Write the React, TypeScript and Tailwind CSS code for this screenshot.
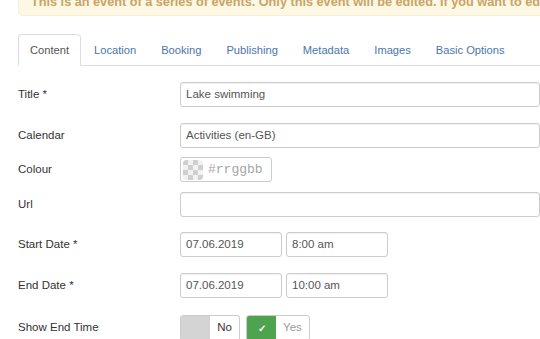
const tabs = ["Content", "Location", "Booking", "Publishing", "Metadata", "Images", "Basic Options"];

const Label = ({ children }: { children: React.ReactNode }) => (
  <label className="w-[162px] shrink-0 text-[11.5px] text-[#333]">{children}</label>
);

const TextInput = ({ value, className }: { value?: string; className?: string }) => (
  <div
    className={`h-[25px] flex items-center px-[5px] border border-[#ccc] rounded-[3px] shadow-[inset_0_1px_1px_rgba(0,0,0,0.06)] text-[11.5px] text-[#555] bg-white ${className ?? ""}`}
  >
    {value}
  </div>
);

const Swatch = () => (
  <svg width="20" height="20" viewBox="0 0 20 20" className="rounded-[3px]">
    <defs>
      <pattern id="chk" width="10" height="10" patternUnits="userSpaceOnUse">
        <rect width="10" height="10" fill="#f2f2f2" />
        <rect width="5" height="5" fill="#cfcfcf" />
        <rect x="5" y="5" width="5" height="5" fill="#cfcfcf" />
      </pattern>
    </defs>
    <rect width="20" height="20" rx="3" fill="url(#chk)" />
  </svg>
);

export default function App() {
  return (
    <div className="w-[540px] h-[339px] overflow-hidden bg-white font-['Liberation_Sans',Arial,sans-serif]">
      <div className="ml-[18px] mt-[-16px] w-[600px] pt-[8px] pb-[4px] px-[12px] leading-[18px] bg-[#fcf8e3] border border-[#fbeed5] rounded-[4px] text-[12.7px] font-bold text-[#c8a468] whitespace-nowrap">
        This is an event of a series of events. Only this event will be edited. If you want to edit
      </div>

      <ul className="ml-[18px] mt-[18px] flex border-b border-[#ddd] whitespace-nowrap">
        {tabs.map((tab, i) => (
          <li
            key={tab}
            className={`-mb-px mr-px h-[32px] flex items-center px-[11px] border rounded-t-[4px] text-[11.15px] ${
              i === 0
                ? "bg-white border-[#ddd] border-b-transparent text-[#555]"
                : "border-transparent text-[#4a76ad]"
            }`}
          >
            {tab}
          </li>
        ))}
      </ul>

      <div className="ml-[18px] flex flex-col">
        <div className="mt-[16px] flex items-center">
          <Label>Title *</Label>
          <TextInput value="Lake swimming" className="w-[400px]" />
        </div>
        <div className="mt-[16px] flex items-center">
          <Label>Calendar</Label>
          <TextInput value="Activities (en-GB)" className="w-[400px]" />
        </div>
        <div className="mt-[9px] flex items-center">
          <Label>Colour</Label>
          <div className="w-[92px] h-[25px] flex items-center gap-[5px] pl-[2px] border border-[#ccc] rounded-[3px]">
            <Swatch />
            <span className="font-['Liberation_Mono',monospace] text-[13px] text-[#a6a6a6]">#rrggbb</span>
          </div>
        </div>
        <div className="mt-[10px] flex items-center">
          <Label>Url</Label>
          <TextInput className="w-[400px]" />
        </div>
        <div className="mt-[15px] flex items-center">
          <Label>Start Date *</Label>
          <div className="flex gap-[4px]">
            <TextInput value="07.06.2019" className="w-[102px]" />
            <TextInput value="8:00 am" className="w-[102px]" />
          </div>
        </div>
        <div className="mt-[16px] flex items-center">
          <Label>End Date *</Label>
          <div className="flex gap-[4px]">
            <TextInput value="07.06.2019" className="w-[102px]" />
            <TextInput value="10:00 am" className="w-[102px]" />
          </div>
        </div>
        <div className="mt-[17px] flex items-center">
          <Label>Show End Time</Label>
          <div className="flex gap-[6px]">
            <div className="flex h-[26px] w-[60px] border border-[#ccc] rounded-[3px] overflow-hidden">
              <span className="w-[29px] bg-[#d4d4d4]" />
              <span className="flex-1 flex items-center justify-center text-[11.5px] text-[#333]">No</span>
            </div>
            <div className="flex h-[26px] w-[64px] border border-[#ccc] rounded-[3px] overflow-hidden">
              <span className="w-[29px] bg-[#4ea44e] flex items-center justify-center text-white text-[10px] font-bold">✓</span>
              <span className="flex-1 flex items-center justify-center text-[11.5px] text-[#999]">Yes</span>
            </div>
          </div>
        </div>
      </div>
    </div>
  );
}
